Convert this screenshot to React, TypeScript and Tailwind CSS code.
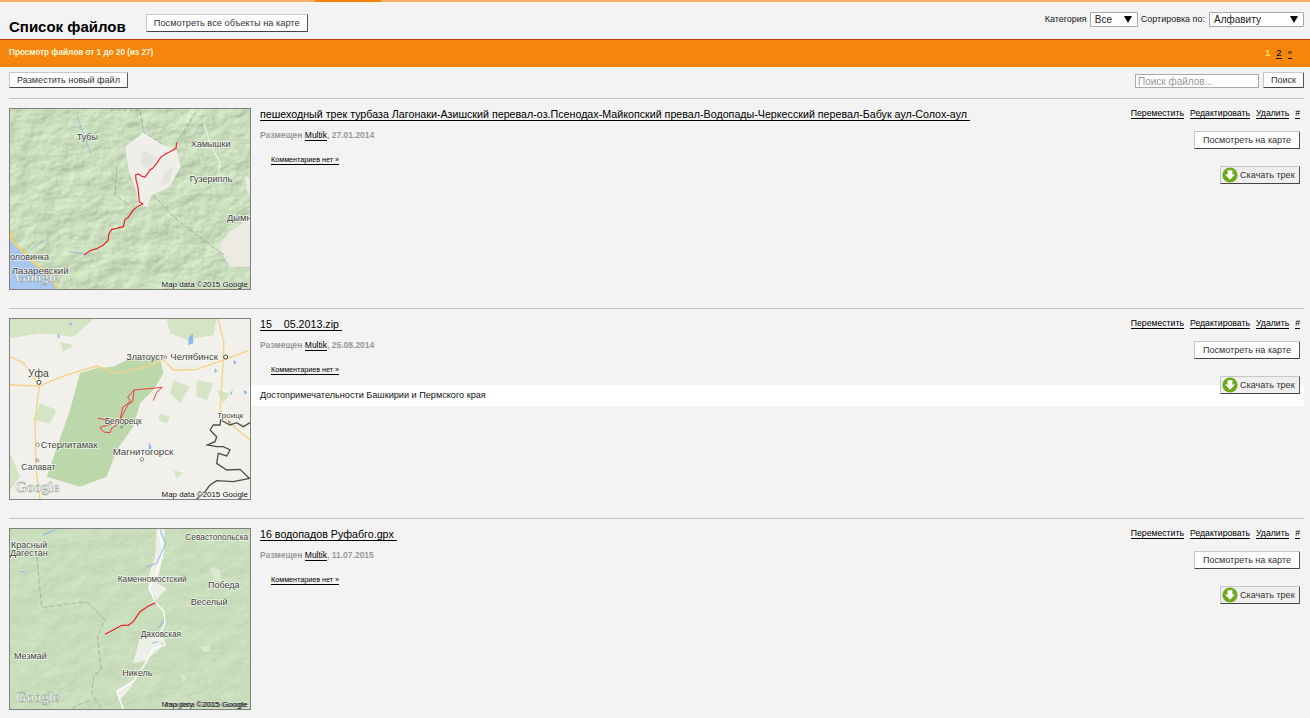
import type { ReactNode } from "react";

const sans = "font-['Liberation_Sans',Arial,sans-serif]";

function Label({ x, y, size = 27, anchor = "start", children }: { x: number; y: number; size?: number; anchor?: "start" | "middle" | "end"; children: ReactNode }) {
  return (
    <text x={x} y={y} fontSize={size} textAnchor={anchor} fill="#3f3f3a" stroke="#ffffff" strokeWidth={4} strokeOpacity={0.75} paintOrder="stroke" fontFamily="Liberation Sans, Arial, sans-serif">
      {children}
    </text>
  );
}

function MapFooter({ overlap = false }: { overlap?: boolean }) {
  return (
    <g>
      <text x={46} y={546} fontSize={44} fontFamily="Liberation Serif, serif" fontWeight="700" fill="#ffffff" fillOpacity={0.85} stroke="#8d9a90" strokeWidth={1.5}>
        Google
      </text>
      <text x={744} y={562} fontSize={23.8} textAnchor="end" fill="#111111" stroke="#ffffff" strokeWidth={3} strokeOpacity={0.6} paintOrder="stroke" fontFamily="Liberation Sans, Arial, sans-serif">
        Map data ©2015 Google
      </text>
      {overlap && (
        <text x={740} y={562} fontSize={23.8} textAnchor="end" fill="#222222" fillOpacity={0.75} fontFamily="Liberation Sans, Arial, sans-serif">
          Imagery ©2015 Google
        </text>
      )}
    </g>
  );
}

// shaded relief for the mountain maps
function Terrain({ id, relief, seed = 7 }: { id: string; relief: number; seed?: number }) {
  return (
    <>
      <filter id={id} x="0" y="0" width="100%" height="100%" colorInterpolationFilters="sRGB">
        <feTurbulence type="fractalNoise" baseFrequency="0.014 0.02" numOctaves={4} seed={seed} result="noise" />
        <feDiffuseLighting in="noise" surfaceScale={relief} diffuseConstant={1} lightingColor="#e4fbd6">
          <feDistantLight azimuth={225} elevation={62} />
        </feDiffuseLighting>
      </filter>
      <rect x={30} y={27} width={720} height={540} filter={`url(#${id})`} />
    </>
  );
}

function MapFrame({ children }: { children: ReactNode }) {
  return (
    <div className="h-[182px] w-[242px] shrink-0 border border-[#808080]">
      <svg viewBox="30 27 720 540" className="block h-[180px] w-[240px]" aria-hidden="true">
        {children}
      </svg>
    </div>
  );
}

function MapOne() {
  return (
    <MapFrame>
      <Terrain id="t1" relief={4} />
      <path d="M375 140 L432 95 L490 135 L530 150 L542 200 L508 262 L455 285 L442 322 L415 312 L410 280 L385 205Z" fill="#efeee9" />
      <path d="M430 150 L470 170 L450 210 L420 190Z M495 215 L520 200 L510 245 L480 260Z" fill="#e4e4de" />
      <path d="M660 430 L690 395 L750 350 L750 500 L690 500 L665 460Z" fill="#eceae3" />
      <path d="M735 230 L750 235 L750 290 L740 270Z" fill="#eceae3" />
      <path d="M30 420 L90 480 L150 525 L172 567 L30 567Z" fill="#a9c8ef" />
      <path d="M30 390 L40 425 L92 482 L150 525 L172 567" fill="none" stroke="#f3cf6d" strokeWidth={6} />
      <path d="M330 30 L420 30 L430 95 L490 135 M530 130 L585 40 M350 200 L345 285 L385 315 M460 285 L520 350 L610 420 L680 470" fill="none" stroke="#9aa39a" strokeWidth={2.5} strokeDasharray="14 5" />
      <path d="M612 70 L630 130 L660 190 L655 220" fill="none" stroke="#eef0ea" strokeWidth={4} />
      <path d="M232 50 L250 100 L272 160 M90 450 L130 424 M205 455 L250 462" fill="none" stroke="#8fb9e8" strokeWidth={2.5} />
      <polyline points="530,128 528,145 510,155 495,163 482,172 470,190 458,205 450,210 435,232 424,228 415,222 407,225 408,240 414,262 416,285 418,305 428,312 412,320 400,330 385,352 375,358 370,380 350,385 335,388 326,402 325,420 310,435 290,446 270,452 252,465" fill="none" stroke="#f0202a" strokeWidth={3.5} />
      <Label x={230} y={119}>Тубы</Label>
      <Label x={572} y={141}>Хамышки</Label>
      <Label x={569} y={245}>Гузерипль</Label>
      <Label x={681} y={362} size={28}>Дымн</Label>
      <Label x={30} y={481}>оловинка</Label>
      <MapFooter />
      <Label x={35} y={522} size={29}>Лазаревский</Label>
    </MapFrame>
  );
}

function MapTwo() {
  return (
    <MapFrame>
      <rect x={30} y={27} width={720} height={540} fill="#f1f0ea" />
      <path d="M30 27 L280 27 L220 80 L120 70 L30 85Z M500 27 L650 27 L640 75 L560 90 L510 70Z M590 210 L640 220 L620 270 L590 260Z M30 430 L60 500 L30 540Z" fill="#d4e4c4" />
      <path d="M480 310 L510 320 L500 340 L476 330Z M520 480 L550 490 L530 505Z M120 280 L170 300 L150 340 L100 330Z M650 240 L690 250 L670 280Z M520 210 L570 230 L540 280 L510 250Z M180 95 L220 105 L190 125Z" fill="#d4e4c4" />
      <path d="M340 170 L400 140 L480 140 L490 190 L460 240 L420 280 L400 350 L350 420 L320 500 L240 530 L140 500 L175 400 L210 300 L240 190 L290 175Z" fill="#bcd7aa" />
      <path d="M30 140 L72 160 L118 228 L200 195 L290 168 L350 190 L440 170 L490 150 L520 180 L590 178 L670 150 L745 122 M118 228 L105 330 L108 480 L120 567 M30 225 L118 228 M655 27 L672 100 L668 180 L660 300 L690 340 L750 390" fill="none" stroke="#f2d488" strokeWidth={4} />
      <path d="M630 360 L640 345 L660 345 L662 330 L690 345 L710 338 L730 350 L750 338 M630 360 L650 380 L645 395 L622 405 L650 410 L670 410 L690 420 L680 438 L655 430 L650 460 L680 480 L720 478 L748 505 L700 515 L650 512 L630 525 L615 545 L590 567" fill="none" stroke="#4e4e4e" strokeWidth={4} />
      <path d="M565 85 L578 70 L580 100 L565 105Z M448 395 L455 415 L445 420Z M690 250 L698 240 L695 255Z M175 70 L180 82 L172 84Z M700 150 L710 155 L702 165Z M645 175 L652 183 L642 190Z M730 240 L742 246 L735 255Z M210 35 L218 45 L208 46Z" fill="#8db8ee" />
      <path d="M294 325 L355 335 L300 352 L310 366 L330 368 L335 355 L358 340 L368 292 L392 274 L383 262 L402 240 L487 232 L470 247 L460 272 M360 330 L385 282 L398 275 L402 240" fill="none" stroke="#f0202a" strokeWidth={2.5} />
      <circle cx={117} cy={217} r={6} fill="#fff" stroke="#444" strokeWidth={3} />
      <circle cx={677} cy={141} r={6} fill="#fff" stroke="#444" strokeWidth={3} />
      <circle cx={496} cy={141} r={4} fill="#fff" stroke="#555" strokeWidth={2} />
      <circle cx={113} cy={404} r={5} fill="#fff" stroke="#555" strokeWidth={2} />
      <circle cx={112} cy={451} r={4} fill="#fff" stroke="#555" strokeWidth={2} />
      <circle cx={426} cy={448} r={5} fill="#fff" stroke="#555" strokeWidth={2} />
      <circle cx={365} cy={351} r={3} fill="#fff" stroke="#555" strokeWidth={2} />
      <circle cx={688} cy={336} r={3} fill="#fff" stroke="#555" strokeWidth={2} />
      <Label x={379} y={151}>Златоуст</Label>
      <Label x={511} y={149} size={29}>Челябинск</Label>
      <Label x={84} y={202} size={31}>Уфа</Label>
      <Label x={314} y={342} size={25}>Белорецк</Label>
      <Label x={652} y={324} size={24}>Троицк</Label>
      <Label x={122} y={414} size={28}>Стерлитамак</Label>
      <Label x={64} y={481} size={26}>Салават</Label>
      <Label x={338} y={434} size={29}>Магнитогорск</Label>
      <MapFooter />
    </MapFrame>
  );
}

function MapThree() {
  return (
    <MapFrame>
      <Terrain id="t3" relief={1.3} seed={12} />
      <path d="M470 27 L495 27 L490 110 L470 190 L500 205 L470 240 L445 210 L445 170 L465 110Z M420 350 L490 350 L480 385 L440 420 L400 430Z M350 510 L400 480 L395 500 L360 540Z" fill="#eef0e8" />
      <path d="M630 140 L660 150 L665 185 L640 180Z M540 460 L560 470 L550 490Z M600 380 L630 375 L630 395 L610 395Z" fill="#dbe7cf" />
      <path d="M475 30 L490 90 L470 160 L448 205 L465 245 L492 275 L495 310 L480 340 L495 375 L460 385 L430 440 L400 485 L350 515 L370 567" fill="none" stroke="#ffffff" strokeWidth={4} />
      <path d="M480 30 L497 70 L470 130 L440 140 M490 300 L476 325 M455 370 L475 365 M60 155 L75 155 M130 45 L165 30" fill="none" stroke="#8db8ee" strokeWidth={3} />
      <path d="M110 110 L125 262 L260 245 L315 300 L292 350 L303 450 L282 465 L275 520 L305 567 M270 540 L210 567" fill="none" stroke="#a4ab9f" strokeWidth={2.5} strokeDasharray="16 6" />
      <polyline points="315,343 355,322 365,316 385,316 400,305 420,275 445,258 467,248" fill="none" stroke="#f0202a" strokeWidth={3.5} />
      <Label x={556} y={61} size={25}>Севастопольска</Label>
      <Label x={33} y={83}>Красный</Label>
      <Label x={30} y={108}>Дагестан</Label>
      <Label x={353} y={186} size={25}>Каменномостский</Label>
      <Label x={624} y={205}>Победа</Label>
      <Label x={572} y={254}>Веселый</Label>
      <Label x={422} y={351} size={25}>Даховская</Label>
      <Label x={42} y={416}>Мезмай</Label>
      <Label x={367} y={468}>Никель</Label>
      <MapFooter overlap />
    </MapFrame>
  );
}

function Btn({ children, className = "" }: { children: ReactNode; className?: string }) {
  return (
    <button type="button" className={`inline-flex items-center rounded-[1px] border border-[#c8c8c8] border-r-[#555] border-b-[#444] pt-[1px] text-[9.05px] text-[#333] ${className}`}>
      {children}
    </button>
  );
}

function Dropdown({ value, className }: { value: string; className: string }) {
  return (
    <span className={`flex h-[15px] items-center justify-between rounded-[1px] border border-[#a9a9a9] bg-white pl-[4px] pr-[5px] text-[10px] text-[#222] ${className}`}>
      {value}
      <span className="h-0 w-0 border-x-[4px] border-t-[7px] border-x-transparent border-t-black" />
    </span>
  );
}

type FileItem = {
  title: string;
  date: string;
  map: ReactNode;
  description?: string;
};

const files: FileItem[] = [
  {
    title: "пешеходный трек турбаза Лагонаки-Азишский перевал-оз.Псенодах-Майкопский превал-Водопады-Черкесский перевал-Бабук аул-Солох-аул ",
    date: "27.01.2014",
    map: <MapOne />,
  },
  {
    title: "15 \u00a0\u00a0 05.2013.zip ",
    date: "25.08.2014",
    map: <MapTwo />,
    description: "Достопримечательности Башкирии и Пермского края",
  },
  {
    title: "16 водопадов Руфабго.gpx ",
    date: "11.07.2015",
    map: <MapThree />,
  },
];

function FileRow({ file }: { file: FileItem }) {
  return (
    <div className="relative flex h-[210px] border-t border-[#c4c4c4] pt-[9px]">
      {file.map}
      <div className="min-w-0 flex-1">
        <div className="pl-[9px] text-[10.7px] leading-[12px] text-black">
          <a className="border-b border-black whitespace-pre">{file.title}</a>
        </div>
        <div className="mt-[10px] pl-[9px] text-[8.5px] leading-[10px] font-bold text-[#999]">
          Размещен <a className="border-b border-black font-normal text-black">Multik</a>, {file.date}
        </div>
        <div className="mt-[15px] pl-[20px] text-[7.2px] leading-[10px] text-black">
          <a className="border-b border-black">Комментариев нет »</a>
        </div>
        {file.description && (
          <div className="mt-[10px] flex h-[21px] items-center bg-white pl-[9px] pt-[1px] text-[9.13px] text-[#111]">{file.description}</div>
        )}
      </div>
      <div className="absolute right-[4px] top-[8px] flex flex-col items-end">
        <div className="flex h-[12px] items-center gap-[6px] text-[8.7px] leading-[10px] text-black">
          <a className="border-b border-black">Переместить</a>
          <a className="border-b border-black">Редактировать</a>
          <a className="border-b border-black">Удалить</a>
          <a className="border-b border-black">#</a>
        </div>
        <Btn className="mt-[12px] h-[18px] w-[106px] justify-center bg-white">Посмотреть на карте</Btn>
        <Btn className="mt-[17px] h-[18px] w-[80px] justify-start gap-[2px] bg-[#efefef] pl-[1px]">
          <svg viewBox="0 0 16 16" className="-mt-[1px] h-[16px] w-[16px]" aria-hidden="true">
            <circle cx="8" cy="8" r="7.6" fill="#6fa81e" />
            <path d="M5.6 3.2h4.8v4.4h2.6L8 12.8 3 7.6h2.6z" fill="#fff" />
          </svg>
          Скачать трек
        </Btn>
      </div>
    </div>
  );
}

export default function App() {
  return (
    <div className={`h-[718px] overflow-hidden bg-[#f3f3f3] ${sans}`}>
      <div className="relative h-[2px] bg-[#fdb266]">
        <div className="absolute left-[315px] top-0 h-[2px] w-[66px] bg-[#f5840b]" />
      </div>
      <div className="h-[1px] bg-[#fdf3dc]" />

      <div className="flex h-[36px] items-start justify-between pl-[9px] pr-[6px]">
        <div className="flex items-start">
          <h1 className="mt-[15px] text-[15px] leading-[18px] font-bold text-black">Список файлов</h1>
          <Btn className="ml-[20px] mt-[11px] h-[18px] w-[162px] justify-center bg-white">
            <span className="text-[9.25px]">Посмотреть все объекты на карте</span>
          </Btn>
        </div>
        <div className="mt-[9px] flex items-center text-[9px] text-[#222]">
          <span>Категория</span>
          <Dropdown value="Все" className="ml-[3px] w-[48px]" />
          <span className="ml-[3px]">Сортировка по:</span>
          <Dropdown value="Алфавиту" className="ml-[4px] w-[95px]" />
        </div>
      </div>

      <div className="flex h-[28px] items-center justify-between border-t border-[#b8390a] bg-[#f5860c] pl-[9px] pr-[18px] text-[8.2px] font-bold text-[#fff5d8]">
        <span>Просмотр файлов от 1 до 20 (из 27)</span>
        <span className="flex items-center gap-[6px] text-[9.5px] font-normal text-black">
          <span className="font-bold text-[#ffe14a]">1</span>
          <a className="border-b border-black leading-[10px]">2</a>
          <a className="border-b border-black text-[8px] leading-[10px]">»</a>
        </span>
      </div>

      <div className="mx-[6px] pl-[3px]">
        <div className="flex h-[31px] items-start justify-between pt-[5px]">
          <Btn className="h-[16px] w-[119px] justify-center bg-white">Разместить новый файл</Btn>
          <div className="mt-[2px] flex items-start">
            <input
              readOnly
              placeholder="Поиск файлов..."
              className="h-[14px] w-[124px] border border-[#a9a9a9] bg-white px-[2px] text-[10px] placeholder:text-[#999]"
            />
            <Btn className="-mt-[2px] ml-[4px] h-[16px] w-[41px] justify-center bg-white">Поиск</Btn>
          </div>
        </div>
        {files.map((file) => (
          <FileRow key={file.date} file={file} />
        ))}
      </div>
    </div>
  );
}
